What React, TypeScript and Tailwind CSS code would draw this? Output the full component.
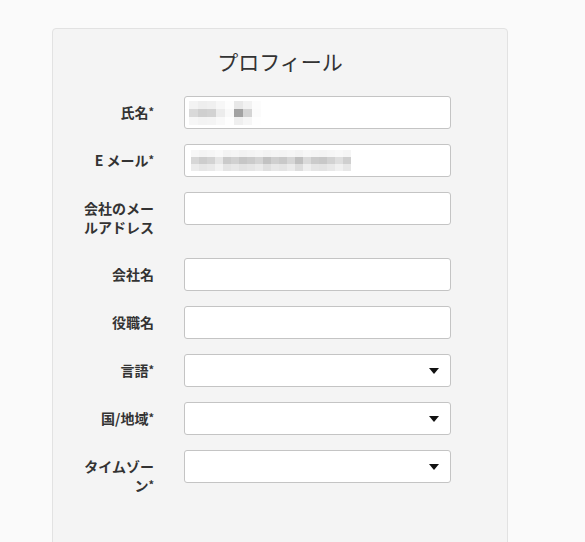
import React from "react";

// blurred (pixelated) field values, drawn as rows of grey blocks
const nameRows: string[][] = [
  ["#f3f3f3", "#eeeeee", "#f0f0f0", "#f7f7f7", "#fdfdfd", "#e8e8e8", "#f2f2f2", "#fcfcfc"],
  ["#d9d9d9", "#cfcfcf", "#d2d2d2", "#ececec", "#f9f9f9", "#a2a2a2", "#d4d4d4", "#fbfbfb"],
  ["#f6f6f6", "#f3f3f3", "#f4f4f4", "#f9f9f9", "#fefefe", "#efefef", "#f6f6f6", "#fefefe"],
];

const emailRows: string[][] = [
  ["#f7f7f7", "#f4f4f4", "#f6f6f6", "#f9f9f9", "#f3f3f3", "#f5f5f5", "#f2f2f2", "#f4f4f4", "#f6f6f6", "#f3f3f3", "#f5f5f5", "#f4f4f4", "#f6f6f6", "#f3f3f3", "#f7f7f7", "#f5f5f5", "#f4f4f4", "#f6f6f6", "#f8f8f8", "#f5f5f5"],
  ["#d7d7d7", "#cdcdcd", "#d3d3d3", "#e6e6e6", "#cacaca", "#d1d1d1", "#c6c6c6", "#cbcbcb", "#d4d4d4", "#c2c2c2", "#cfcfcf", "#c9c9c9", "#d6d6d6", "#c0c0c0", "#dadada", "#cbcbcb", "#c8c8c8", "#d2d2d2", "#dedede", "#cfcfcf"],
  ["#ececec", "#e6e6e6", "#e9e9e9", "#f2f2f2", "#e4e4e4", "#e8e8e8", "#e2e2e2", "#e5e5e5", "#eaeaea", "#dfdfdf", "#e7e7e7", "#e4e4e4", "#ebebeb", "#dddddd", "#eeeeee", "#e5e5e5", "#e3e3e3", "#e8e8e8", "#f0f0f0", "#e7e7e7"],
];

function Pixels({ rows, size }: { rows: string[][]; size: number }) {
  return (
    <div className="flex flex-col">
      {rows.map((row, i) => (
        <div key={i} className="flex">
          {row.map((c, j) => (
            <div key={j} style={{ width: size, height: size - 1, backgroundColor: c }} />
          ))}
        </div>
      ))}
    </div>
  );
}

function Field({ children, select }: { children?: React.ReactNode; select?: boolean }) {
  return (
    <div className="flex h-[33px] w-[267px] shrink-0 items-center rounded-[3px] border border-[#c4c4c4] bg-white pl-[4px] pr-[11px]">
      <div className="flex-1">{children}</div>
      {select && (
        <svg width="10" height="6" viewBox="0 0 10 6">
          <path d="M0 0h10L5 6z" fill="#111" />
        </svg>
      )}
    </div>
  );
}

function Row({ label, children, select }: { label: string; children?: React.ReactNode; select?: boolean }) {
  const star = label.endsWith("*");
  const text = star ? label.slice(0, -1) : label;
  return (
    <div className="mb-[15px] flex items-start">
      <label className="w-[76px] shrink-0 pt-[7px] pb-[6px] text-right text-[14px] font-bold leading-[19px] text-[#333]">
        {text}
        {star && <span className="align-[2px] text-[11px] leading-none">*</span>}
      </label>
      <div className="ml-[30px]">
        <Field select={select}>{children}</Field>
      </div>
    </div>
  );
}

export default function App() {
  return (
    <div
      className="min-h-[542px] overflow-hidden bg-[#fafafa] pt-[28px]"
      style={{ fontFamily: '"Noto Sans CJK JP", "Noto Sans", sans-serif' }}
    >
      <div className="ml-[52px] w-[456px] rounded-[4px] border border-[#e2e2e2] bg-[#f4f4f4] pt-[18px] pb-[80px] pl-[25px]">
        <h1 className="mb-[21px] pr-[25px] text-center text-[21px] font-normal leading-[28px] text-[#333]">
          プロフィール
        </h1>
        <Row label="氏名*">
          <Pixels rows={nameRows} size={9} />
        </Row>
        <Row label="E メール*">
          <div className="pl-[2px]">
            <Pixels rows={emailRows} size={8} />
          </div>
        </Row>
        <Row label="会社のメールアドレス" />
        <Row label="会社名" />
        <Row label="役職名" />
        <Row label="言語*" select />
        <Row label="国/地域*" select />
        <Row label="タイムゾーン*" select />
      </div>
    </div>
  );
}
